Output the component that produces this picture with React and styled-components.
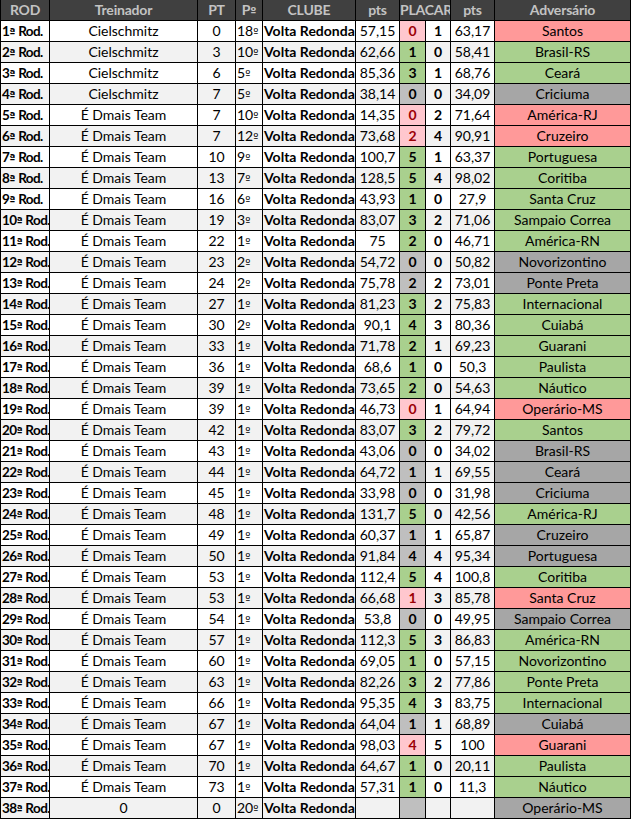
import React from 'react';
import styled, { createGlobalStyle } from 'styled-components';

const rows = [
    ['Cielschmitz', 0, '18', '57,15', 0, 1, '63,17', 'Santos'],
    ['Cielschmitz', 3, '10', '62,66', 1, 0, '58,41', 'Brasil-RS'],
    ['Cielschmitz', 6, '5', '85,36', 3, 1, '68,76', 'Ceará'],
    ['Cielschmitz', 7, '5', '38,14', 0, 0, '34,09', 'Criciuma'],
    ['É Dmais Team', 7, '10', '14,35', 0, 2, '71,64', 'América-RJ'],
    ['É Dmais Team', 7, '12', '73,68', 2, 4, '90,91', 'Cruzeiro'],
    ['É Dmais Team', 10, '9', '100,7', 5, 1, '63,37', 'Portuguesa'],
    ['É Dmais Team', 13, '7', '128,5', 5, 4, '98,02', 'Coritiba'],
    ['É Dmais Team', 16, '6', '43,93', 1, 0, '27,9', 'Santa Cruz'],
    ['É Dmais Team', 19, '3', '83,07', 3, 2, '71,06', 'Sampaio Correa'],
    ['É Dmais Team', 22, '1', '75', 2, 0, '46,71', 'América-RN'],
    ['É Dmais Team', 23, '2', '54,72', 0, 0, '50,82', 'Novorizontino'],
    ['É Dmais Team', 24, '2', '75,78', 2, 2, '73,01', 'Ponte Preta'],
    ['É Dmais Team', 27, '1', '81,23', 3, 2, '75,83', 'Internacional'],
    ['É Dmais Team', 30, '2', '90,1', 4, 3, '80,36', 'Cuiabá'],
    ['É Dmais Team', 33, '1', '71,78', 2, 1, '69,23', 'Guarani'],
    ['É Dmais Team', 36, '1', '68,6', 1, 0, '50,3', 'Paulista'],
    ['É Dmais Team', 39, '1', '73,65', 2, 0, '54,63', 'Náutico'],
    ['É Dmais Team', 39, '1', '46,73', 0, 1, '64,94', 'Operário-MS'],
    ['É Dmais Team', 42, '1', '83,07', 3, 2, '79,72', 'Santos'],
    ['É Dmais Team', 43, '1', '43,06', 0, 0, '34,02', 'Brasil-RS'],
    ['É Dmais Team', 44, '1', '64,72', 1, 1, '69,55', 'Ceará'],
    ['É Dmais Team', 45, '1', '33,98', 0, 0, '31,98', 'Criciuma'],
    ['É Dmais Team', 48, '1', '131,7', 5, 0, '42,56', 'América-RJ'],
    ['É Dmais Team', 49, '1', '60,37', 1, 1, '65,87', 'Cruzeiro'],
    ['É Dmais Team', 50, '1', '91,84', 4, 4, '95,34', 'Portuguesa'],
    ['É Dmais Team', 53, '1', '112,4', 5, 4, '100,8', 'Coritiba'],
    ['É Dmais Team', 53, '1', '66,68', 1, 3, '85,78', 'Santa Cruz'],
    ['É Dmais Team', 54, '1', '53,8', 0, 0, '49,95', 'Sampaio Correa'],
    ['É Dmais Team', 57, '1', '112,3', 5, 3, '86,83', 'América-RN'],
    ['É Dmais Team', 60, '1', '69,05', 1, 0, '57,15', 'Novorizontino'],
    ['É Dmais Team', 63, '1', '82,26', 3, 2, '77,86', 'Ponte Preta'],
    ['É Dmais Team', 66, '1', '95,35', 4, 3, '83,75', 'Internacional'],
    ['É Dmais Team', 67, '1', '64,04', 1, 1, '68,89', 'Cuiabá'],
    ['É Dmais Team', 67, '1', '98,03', 4, 5, '100', 'Guarani'],
    ['É Dmais Team', 70, '1', '64,67', 1, 0, '20,11', 'Paulista'],
    ['É Dmais Team', 73, '1', '57,31', 1, 0, '11,3', 'Náutico'],
    ['0', 0, '20', '', '', '', '', 'Operário-MS'],
]

const colors = {
    win: { score: '#a9d08e', scoreText: '#000', opp: '#a9d08e' },
    draw: { score: '#bfbfbf', scoreText: '#000', opp: '#a6a6a6' },
    loss: { score: '#ffc7ce', scoreText: '#9c0006', opp: '#ff9999' },
}

const result = (a, b) => {
    if (a === '' || b === '') return 'draw'
    if (a > b) return 'win'
    if (a < b) return 'loss'
    return 'draw'
}

export default function App() {
    return (
        <>
            <GlobalStyle />
            <Sheet>
                <HeadCell>ROD</HeadCell>
                <HeadCell>Treinador</HeadCell>
                <HeadCell>PT</HeadCell>
                <HeadCell>P<Ord>º</Ord></HeadCell>
                <HeadCell>CLUBE</HeadCell>
                <HeadCell>pts</HeadCell>
                <HeadCell $span={2}>PLACAR</HeadCell>
                <HeadCell>pts</HeadCell>
                <HeadCell>Adversário</HeadCell>
                {rows.map((r, i) => {
                    const [coach, pt, pos, pts, gf, ga, oppPts, opp] = r
                    const c = colors[result(gf, ga)]
                    const stripe = i % 2 === 1 ? '#f2f2f2' : '#ffffff'
                    return (
                        <React.Fragment key={i}>
                            <RodCell $bg={stripe}>{i + 1}<Ord>ª</Ord> Rod.</RodCell>
                            <Cell $bg={stripe}>{coach}</Cell>
                            <Cell $bg={stripe}>{pt}</Cell>
                            <Cell $bg={stripe} $align='left'>{pos}<Ord>º</Ord></Cell>
                            <Cell $bg={stripe} $bold $align='left'>Volta Redonda</Cell>
                            <Cell $bg={stripe}>{pts}</Cell>
                            <Cell $bg={c.score} $color={c.scoreText} $bold>{gf}</Cell>
                            <Cell $bg={stripe} $bold>{ga}</Cell>
                            <Cell $bg={stripe}>{oppPts}</Cell>
                            <Cell $bg={c.opp}>{opp}</Cell>
                        </React.Fragment>
                    )
                })}
            </Sheet>
        </>
    )
}

const GlobalStyle = createGlobalStyle`
body {
margin: 0;
background: #ffffff;
font-family: Lato, "Liberation Sans", sans-serif;
}
`
const Sheet = styled.div`
display: grid;
grid-template-columns: 49px 148px 38px 27px 93px 44px 26px 25px 44px 136px;
grid-auto-rows: 21px;
width: 631px;
border-left: 1px solid #000;
box-sizing: border-box;
font-size: 14px;
`
const HeadCell = styled.div`
grid-column: span ${p => p.$span || 1};
background: #404040;
color: #c3c3c3;
font-weight: bold;
text-align: center;
line-height: 20px;
letter-spacing: -0.2px;
border-right: 1px solid #000;
border-bottom: 1px solid #000;
overflow: hidden;
white-space: nowrap;
`
const Cell = styled.div`
background: ${p => p.$bg};
color: ${p => p.$color || '#000'};
font-weight: ${p => p.$bold ? 'bold' : 'normal'};
text-align: ${p => p.$align || 'center'};
padding-left: ${p => p.$align === 'left' ? '1px' : '0'};
line-height: 20px;
border-right: 1px solid #000;
border-bottom: 1px solid #000;
overflow: hidden;
white-space: nowrap;
`
const RodCell = styled(Cell)`
font-weight: bold;
text-align: left;
padding-left: 1px;
font-size: 13.5px;
letter-spacing: -0.6px;
`
const Ord = styled.span`
font-family: "DejaVu Sans", sans-serif;
font-size: 11px;
letter-spacing: 0;
`
